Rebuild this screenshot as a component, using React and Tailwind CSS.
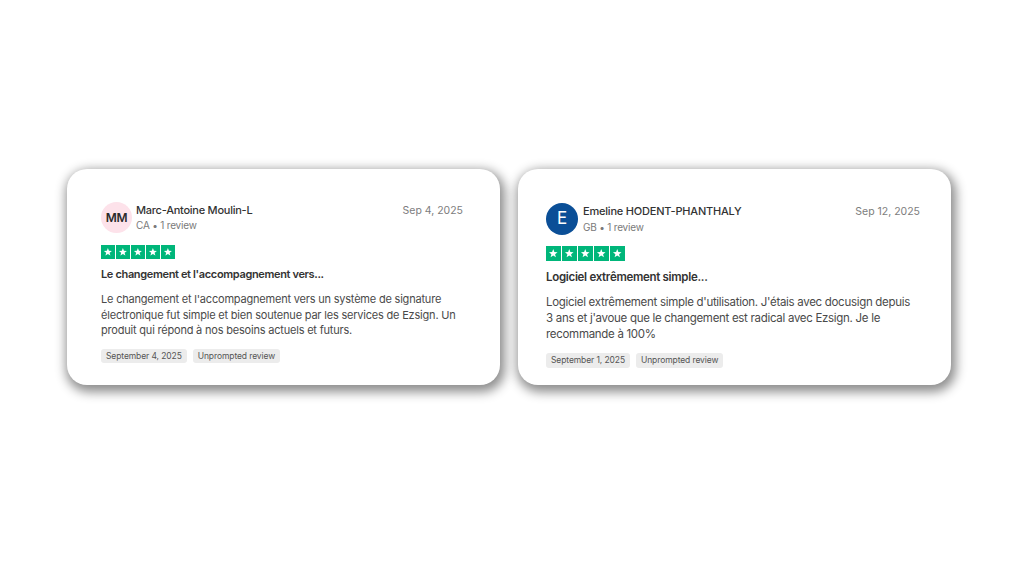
import React from "react";

function Stars({ size }) {
  return (
    <div className="flex gap-[1px]">
      {[0, 1, 2, 3, 4].map((i) => (
        <div
          key={i}
          className="flex items-center justify-center bg-[#00b67a]"
          style={{ width: size, height: size }}
        >
          <svg viewBox="0 0 24 24" width={size * 0.7} height={size * 0.7}>
            <polygon
              fill="#ffffff"
              points="12,2.5 14.6,9.3 21.8,9.6 16.2,14.1 18.1,21.1 12,17.1 5.9,21.1 7.8,14.1 2.2,9.6 9.4,9.3"
            />
          </svg>
        </div>
      ))}
    </div>
  );
}

export default function App() {
  return (
    <div
      className="w-[1024px] h-[576px] bg-white flex items-start pt-[169px] pl-[67px] gap-[18px]"
      style={{ fontFamily: "Inter, 'Liberation Sans', sans-serif" }}
    >
      {/* Card 1 */}
      <div className="w-[433px] h-[216px] bg-white rounded-[20px] shadow-[2px_4px_11px_3px_rgba(0,0,0,0.45)] pl-[34px] pr-[37px] pt-[33px] flex flex-col">
        <div className="flex items-center">
          <div className="w-[31px] h-[31px] rounded-full bg-[#fde2ea] flex items-center justify-center text-[12px] font-semibold text-[#2b2b2b] tracking-[-0.3px]">
            MM
          </div>
          <div className="ml-[4px] flex flex-col flex-1">
            <div className="flex justify-between items-baseline">
              <span className="text-[11px] leading-[15px] font-medium text-[#333] tracking-[-0.25px]">
                Marc-Antoine Moulin-L
              </span>
              <span className="text-[10.5px] leading-[15px] text-[#7d7d7d]">Sep 4, 2025</span>
            </div>
            <span className="text-[10px] leading-[15px] text-[#7a7a7a] tracking-[-0.2px]">CA • 1 review</span>
          </div>
        </div>
        <div className="mt-[12px]">
          <Stars size={14} />
        </div>
        <div className="mt-[8px] text-[11px] leading-[15px] font-semibold text-[#333] tracking-[-0.35px]">
          Le changement et l'accompagnement vers...
        </div>
        <div className="mt-[10px] text-[11px] leading-[15.5px] text-[#4a4a4a] tracking-[-0.2px] whitespace-nowrap">
          Le changement et l'accompagnement vers un système de signature
          <br />
          électronique fut simple et bien soutenue par les services de Ezsign. Un
          <br />
          produit qui répond à nos besoins actuels et futurs.
        </div>
        <div className="mt-[10px] flex gap-[6px]">
          <span className="h-[14px] px-[5px] rounded-[3px] bg-[#ececec] text-[8.5px] leading-[14px] text-[#555] tracking-[-0.1px]">
            September 4, 2025
          </span>
          <span className="h-[14px] px-[5px] rounded-[3px] bg-[#ececec] text-[8.5px] leading-[14px] text-[#555] tracking-[-0.1px]">
            Unprompted review
          </span>
        </div>
      </div>

      {/* Card 2 */}
      <div className="w-[433px] h-[216px] bg-white rounded-[20px] shadow-[2px_4px_11px_3px_rgba(0,0,0,0.45)] pl-[28px] pr-[31px] pt-[34px] flex flex-col">
        <div className="flex items-center">
          <div className="w-[32px] h-[32px] rounded-full bg-[#0b4f97] flex items-center justify-center text-[17px] text-white">
            E
          </div>
          <div className="ml-[5px] flex flex-col flex-1">
            <div className="flex justify-between items-baseline">
              <span className="text-[11px] leading-[16px] font-medium text-[#333] tracking-[-0.2px]">
                Emeline HODENT-PHANTHALY
              </span>
              <span className="text-[10.5px] leading-[16px] text-[#7d7d7d]">Sep 12, 2025</span>
            </div>
            <span className="text-[10px] leading-[15px] text-[#7a7a7a] tracking-[-0.2px]">GB • 1 review</span>
          </div>
        </div>
        <div className="mt-[11px]">
          <Stars size={15} />
        </div>
        <div className="mt-[8px] text-[11.5px] leading-[16px] font-semibold text-[#333] tracking-[-0.3px]">
          Logiciel extrêmement simple...
        </div>
        <div className="mt-[9px] text-[11.5px] leading-[16px] text-[#4a4a4a] tracking-[-0.3px] whitespace-nowrap">
          Logiciel extrêmement simple d'utilisation. J'étais avec docusign depuis
          <br />
          3 ans et j'avoue que le changement est radical avec Ezsign. Je le
          <br />
          recommande à 100%
        </div>
        <div className="mt-[11px] flex gap-[6px]">
          <span className="h-[15px] px-[5px] rounded-[3px] bg-[#ececec] text-[8.5px] leading-[15px] text-[#555] tracking-[-0.1px]">
            September 1, 2025
          </span>
          <span className="h-[15px] px-[5px] rounded-[3px] bg-[#ececec] text-[8.5px] leading-[15px] text-[#555] tracking-[-0.1px]">
            Unprompted review
          </span>
        </div>
      </div>
    </div>
  );
}
